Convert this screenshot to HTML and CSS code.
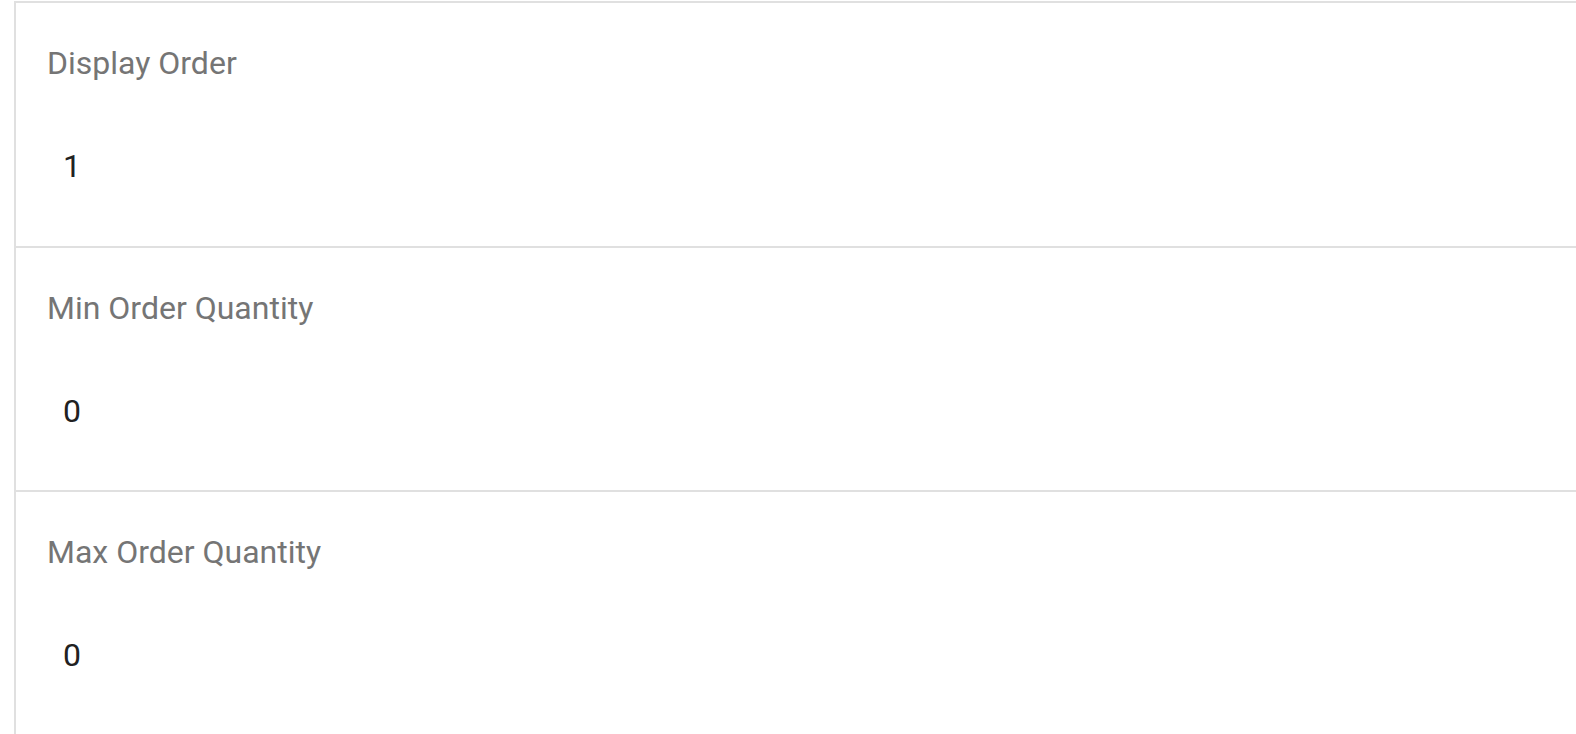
FILE: index.html
```html
<!DOCTYPE html>
<html lang="en">
<head>
<meta charset="utf-8">
<title>Order settings</title>
<link rel="stylesheet" href="styles.css">
</head>
<body>
<div class="panel">
  <div class="field">
    <div class="label">Display Order</div>
    <div class="value">1</div>
  </div>
  <div class="field">
    <div class="label">Min Order Quantity</div>
    <div class="value">0</div>
  </div>
  <div class="field">
    <div class="label">Max Order Quantity</div>
    <div class="value">0</div>
  </div>
</div>
</body>
</html>
```
FILE: styles.css
```css
html, body {
  margin: 0;
  padding: 0;
  background: #ffffff;
  overflow: hidden;
}
body {
  font-family: Roboto, "Liberation Sans", Arial, sans-serif;
  height: 734px;
}
.panel {
  margin: 1px 0 0 14px;
  border-left: 2px solid #e0e0e0;
  min-height: 800px;
}
.field {
  border-top: 2px solid #e0e0e0;
  padding: 42px 0 0 31px;
  height: 245px;
  box-sizing: border-box;
  display: flex;
  flex-direction: column;
  gap: 66px;
}
.field + .field {
  height: 244px;
}
.label {
  font-size: 32px;
  line-height: 37px;
  color: #757575;
}
.value {
  font-size: 32px;
  line-height: 37px;
  color: #212121;
  padding-left: 16px;
}
```
